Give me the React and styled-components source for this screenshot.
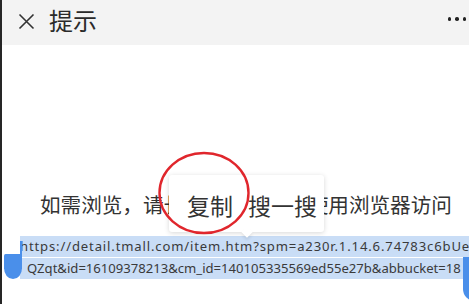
import React from "react";
import styled, { createGlobalStyle } from "styled-components";

const Global = createGlobalStyle`
  html, body { margin: 0; padding: 0; background: #fff; }
  body { width: 469px; height: 304px; overflow: hidden; font-family: "Noto Sans", "Noto Sans CJK SC", sans-serif; }
  #root { width: 469px; height: 304px; }
`;

const Page = styled.div`
  position: relative;
  width: 469px;
  height: 304px;
  box-sizing: border-box;
  border-left: 2px solid #262626;
  background: #fff;
  display: flex;
  flex-direction: column;
  overflow: hidden;
`;

const Header = styled.div`
  height: 45px;
  flex: none;
  background: #f3f3f3;
  display: flex;
  align-items: center;
  padding: 0 3px 0 14px;
`;

const CloseButton = styled.div`
  width: 20px;
  height: 20px;
  display: flex;
  align-items: center;
  justify-content: center;
  margin-top: -3px;
`;

const Title = styled.div`
  margin-left: 13px;
  font-family: "Noto Sans CJK SC", sans-serif;
  font-size: 24px;
  line-height: 30px;
  color: #2a2a2a;
  margin-top: -5px;
`;

const Spacer = styled.div`
  flex: 1;
`;

const More = styled.div`
  display: flex;
  gap: 4px;
  margin-top: -7px;
`;

const Dot = styled.span`
  width: 3.5px;
  height: 3.5px;
  border-radius: 50%;
  background: #222;
`;

const Main = styled.div`
  position: relative;
  flex: 1;
  display: flex;
  flex-direction: column;
`;

const Message = styled.div`
  margin-top: 145px;
  padding-left: 38px;
  font-family: "Noto Sans CJK SC", sans-serif;
  font-size: 20.6px;
  line-height: 28px;
  color: #333;
  white-space: nowrap;
`;

const UrlBlock = styled.div`
  margin-top: 18px;
  padding-left: 18px;
  display: flex;
  flex-direction: column;
  gap: 1px;
`;

const UrlLine = styled.div`
  height: 21px;
  line-height: 21px;
  background: #c9ddf6;
  font-family: "Noto Sans", sans-serif;
  font-size: 13.1px;
  letter-spacing: ${(p) => p.$spacing || 0}px;
  color: #3a3a3a;
  white-space: nowrap;
  overflow: hidden;
  padding-left: ${(p) => p.$indent || 0}px;
  width: ${(p) => p.$width}px;
  box-sizing: border-box;
`;

const Popup = styled.div`
  position: absolute;
  left: 167px;
  top: 130px;
  width: 155px;
  height: 57px;
  box-sizing: border-box;
  background: #fff;
  border-radius: 3px;
  box-shadow: 0 1px 5px rgba(0, 0, 0, 0.16);
  display: flex;
  align-items: center;
  padding: 2px 0 0 18px;
  gap: 15px;
  font-family: "Noto Sans CJK SC", sans-serif;
  font-size: 23px;
  color: #333;
  &::after {
    content: "";
    position: absolute;
    left: 74px;
    bottom: -4px;
    width: 8px;
    height: 8px;
    background: #fff;
    transform: rotate(45deg);
    box-shadow: 2px 2px 3px rgba(0, 0, 0, 0.08);
  }
`;

const PopupItem = styled.span`
  position: relative;
  z-index: 1;
  white-space: nowrap;
`;

const Ring = styled.svg`
  position: absolute;
  left: 152px;
  top: 104px;
  pointer-events: none;
`;

const LeftHandle = styled.div`
  position: absolute;
  left: 2px;
  top: 209px;
  width: 18px;
  height: 25px;
  background: #4a8fea;
  border-radius: 2px 0 11px 11px / 2px 0 13px 13px;
`;

const Caret = styled.div`
  position: absolute;
  left: 18px;
  top: 196px;
  width: 2px;
  height: 14px;
  background: #4a8fea;
`;

const RightHandle = styled.div`
  position: absolute;
  left: 461px;
  top: 212px;
  width: 14px;
  height: 44px;
  background: #4a8fea;
  border-radius: 0 0 0 12px;
`;

export default function App() {
  return (
    <>
      <Global />
      <Page>
        <Header>
          <CloseButton>
            <svg width="17" height="17" viewBox="0 0 17 17">
              <path d="M1.5 1.5 L15.5 15.5 M15.5 1.5 L1.5 15.5" stroke="#333" strokeWidth="1.6" fill="none" />
            </svg>
          </CloseButton>
          <Title>提示</Title>
          <Spacer />
          <More>
            <Dot />
            <Dot />
            <Dot />
          </More>
        </Header>
        <Main>
          <Message>如需浏览，请长按网址复制后使用浏览器访问</Message>
          <UrlBlock>
            <UrlLine $width={451} $spacing={0.85}>https://detail.tmall.com/item.htm?spm=a230r.1.14.6.74783c6bUe</UrlLine>
            <UrlLine $width={445} $indent={7}>QZqt&amp;id=16109378213&amp;cm_id=140105335569ed55e27b&amp;abbucket=18</UrlLine>
          </UrlBlock>
          <Popup>
            <PopupItem>复制</PopupItem>
            <PopupItem>搜一搜</PopupItem>
          </Popup>
          <Ring width="100" height="90" viewBox="0 0 100 90">
            <ellipse cx="50" cy="44" rx="44.5" ry="40" fill="none" stroke="#e0262c" strokeWidth="2.4" />
          </Ring>
          <Caret />
          <LeftHandle />
          <RightHandle />
        </Main>
      </Page>
    </>
  );
}
